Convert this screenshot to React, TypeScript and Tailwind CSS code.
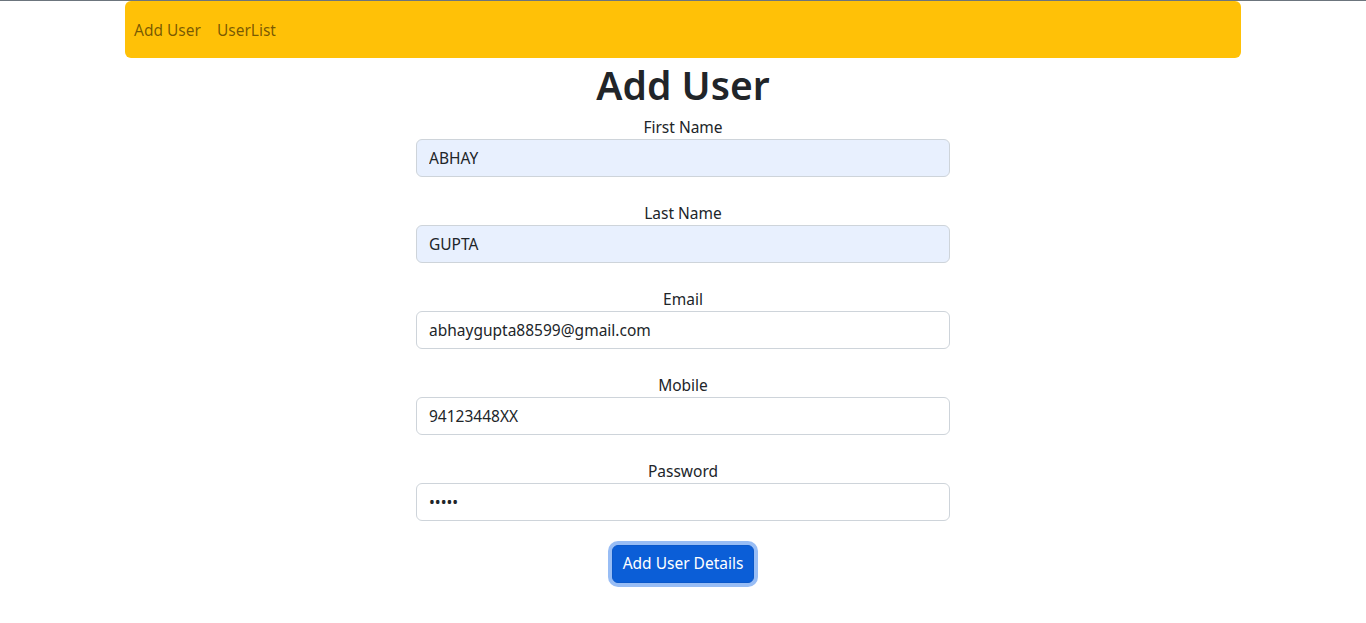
import React, { useState } from "react";

const fields = [
  { label: "First Name", type: "text", value: "ABHAY", autofill: true },
  { label: "Last Name", type: "text", value: "GUPTA", autofill: true },
  { label: "Email", type: "text", value: "abhaygupta88599@gmail.com", autofill: false },
  { label: "Mobile", type: "text", value: "94123448XX", autofill: false },
  { label: "Password", type: "password", value: "abcde", autofill: false },
];

const App: React.FC = () => {
  const [values, setValues] = useState(fields.map((f) => f.value));

  return (
    <div className="min-h-screen bg-white text-[#212529] font-['Noto_Sans',sans-serif] border-t border-[#6c757d]">
      <div className="mx-auto w-[1116px]">
        <nav className="flex items-center h-[57px] px-[9px] pt-[2px] gap-4 bg-[#ffc107] rounded-md">
          <a href="#" className="text-[15.5px] text-black/55">Add User</a>
          <a href="#" className="text-[15.5px] text-black/55">UserList</a>
        </nav>
      </div>

      <div className="mx-auto w-[534px] flex flex-col items-center">
        <h1 className="text-[39px] leading-[48px] font-semibold mt-[3px] mb-[6px]">Add User</h1>
        {fields.map((f, i) => (
          <div key={f.label} className="w-full flex flex-col items-center mb-[24px]">
            <label className="text-[15.5px] leading-6">{f.label}</label>
            <input
              type={f.type}
              value={values[i]}
              onChange={(e) => {
                const next = [...values];
                next[i] = e.target.value;
                setValues(next);
              }}
              className={`w-full h-[38px] px-3 text-[15.5px] text-[#212529] border border-[#ced4da] rounded-md outline-none ${
                f.autofill ? "bg-[#e8f0fe]" : "bg-white"
              }`}
            />
          </div>
        ))}
        <button className="h-[38px] px-[10px] text-[15.5px] text-white bg-[#0b5ed7] border border-[#0a58ca] rounded-md ring-4 ring-[#98bdf5]">
          Add User Details
        </button>
      </div>
    </div>
  );
};

export default App;
